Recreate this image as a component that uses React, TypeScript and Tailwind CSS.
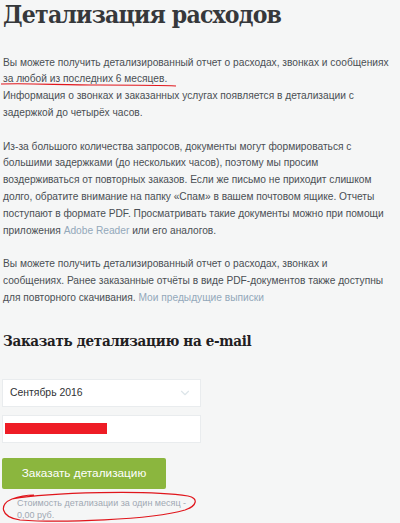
import { ChevronDown } from "lucide-react";

const body = "font-[family-name:Liberation_Sans,Arial,sans-serif]";
const slab = "font-[family-name:DejaVu_Serif,serif] font-stretch-condensed";

export default function App() {
  return (
    <div className={`relative min-h-[523px] w-[400px] bg-[#f5f6f6] pl-[2px] ${body}`}>
      <h1 className={`${slab} pl-[1px] text-[24.5px] leading-[30px] font-bold tracking-[-0.8px] text-[#36383b]`}>
        Детализация расходов
      </h1>

      <div className="mt-[24.6px] w-[389px] pl-[1px] text-[10.2px] leading-[16.8px] text-[#4a4f54]">
        <p>
          Вы можете получить детализированный отчет о расходах, звонках и сообщениях за любой из последних 6
          месяцев.
          <br />
          Информация о звонках и заказанных услугах появляется в детализации с задержкой до четырёх часов.
        </p>

        <p className="mt-[16.8px]">
          Из-за большого количества запросов, документы могут формироваться с большими задержками (до нескольких
          часов), поэтому мы просим воздерживаться от повторных заказов. Если же письмо не приходит слишком долго,
          обратите внимание на папку «Спам» в вашем почтовом ящике. Отчеты поступают в формате PDF. Просматривать
          такие документы можно при помощи приложения <a className="text-[#93a8ba]">Adobe Reader</a> или его
          аналогов.
        </p>

        <p className="mt-[16.8px]">
          Вы можете получить детализированный отчет о расходах, звонках и сообщениях. Ранее заказанные отчёты в
          виде PDF-документов также доступны для повторного скачивания.{" "}
          <a className="text-[#93a8ba]">Мои предыдущие выписки</a>
        </p>
      </div>

      <h2 className={`${slab} mt-[24.2px] pl-[1px] text-[15px] leading-[20px] font-bold tracking-[-0.3px] text-[#1f2022]`}>
        Заказать детализацию на e-mail
      </h2>

      <div className="mt-[28.2px] flex w-[199px] flex-col gap-[8px]">
        <div className="flex h-[28px] items-center justify-between border border-[#e9ecee] bg-white pl-[7px] pr-[8px] text-[10.4px] text-[#2f3134]">
          <span>Сентябрь 2016</span>
          <ChevronDown className="h-[14px] w-[14px] text-[#dde5e9]" strokeWidth={2} />
        </div>
        <div className="flex h-[28px] items-center border border-[#e9ecee] bg-white pl-[2px]">
          <div className="h-[11px] w-[102px] bg-[#ee1c25]" />
        </div>
      </div>

      <button className="mt-[15px] h-[31px] w-[164px] rounded-[2px] bg-[#8bb63e] text-[11.8px] text-white">
        Заказать детализацию
      </button>

      <p className="mt-[8px] pl-[15px] text-[9px] leading-[12px] text-[#a0a8b3]">
        Стоимость детализации за один месяц -
        <br />
        0,00 руб.
      </p>

      <svg className="pointer-events-none absolute left-0 top-[80px]" width="180" height="8" viewBox="0 0 180 8">
        <path d="M1 4 C 30 3, 60 5, 100 5 S 160 5, 176 6" stroke="#e0161c" strokeWidth="1.2" fill="none" />
      </svg>

      <svg className="pointer-events-none absolute left-0 top-[490px]" width="200" height="33" viewBox="0 0 200 33">
        <path
          d="M12 9 C 50 2, 150 0, 188 6 C 199 8, 197 16, 185 20 C 150 30, 60 33, 20 30 C 0 27, -1 14, 12 9 C 20 6, 28 5, 34 5"
          stroke="#e0161c"
          strokeWidth="1.2"
          fill="none"
        />
      </svg>
    </div>
  );
}
